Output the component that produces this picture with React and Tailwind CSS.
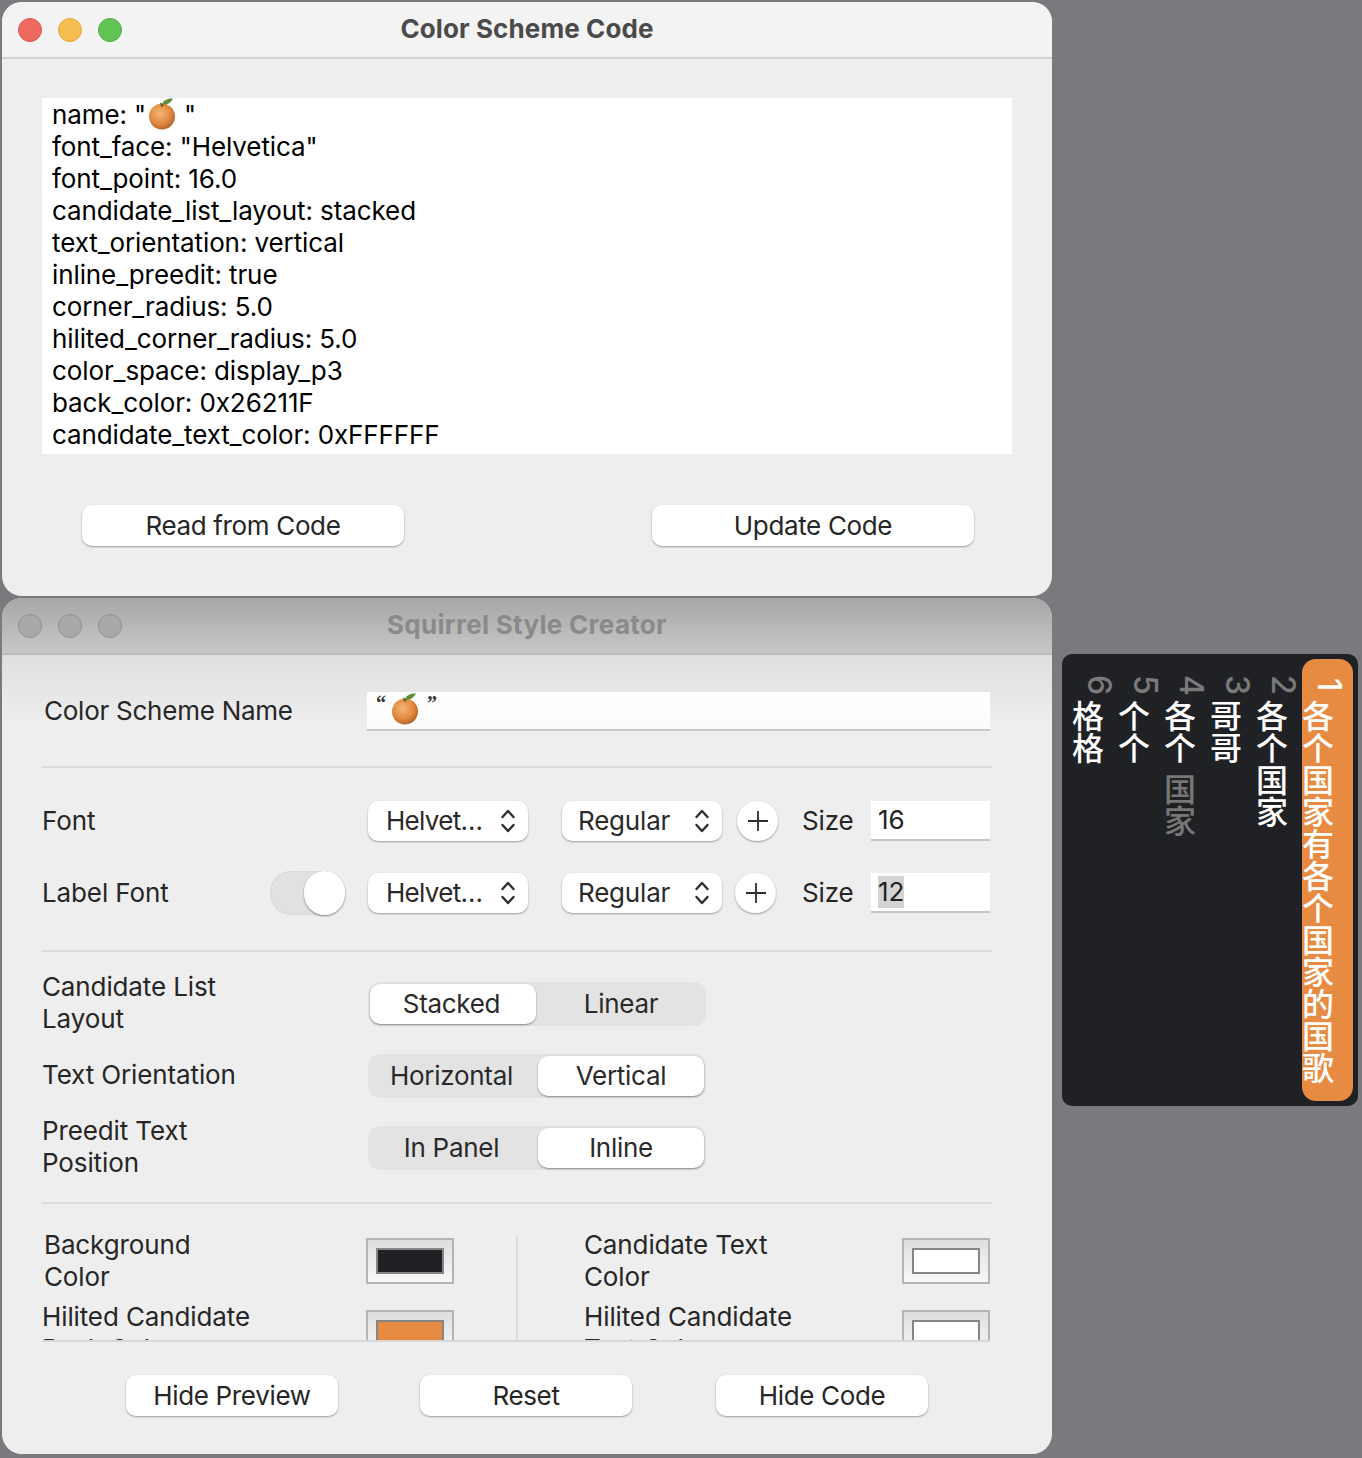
import React from "react";

const Orange = ({ id, className }) => (
  <svg viewBox="0 0 28 32" className={className}>
    <defs>
      <radialGradient id={id} cx="0.42" cy="0.38" r="0.7">
        <stop offset="0" stopColor="#f4b57c" />
        <stop offset="0.55" stopColor="#e48c42" />
        <stop offset="1" stopColor="#a85a20" />
      </radialGradient>
    </defs>
    <circle cx="14" cy="18.5" r="13" fill={`url(#${id})`} />
    <path d="M14 6.5 C15 2.5 19 0 25 0.5 C23 4.5 19 7.5 14 6.5Z" fill="#5f8f3a" />
    <path d="M14 7 L12.5 5" stroke="#4d6b2a" strokeWidth="1.4" />
    <circle cx="14" cy="7.4" r="1.3" fill="#6e5a25" />
  </svg>
);

const Lights = ({ inactive }) => (
  <div className="flex gap-[16px]">
    {(inactive
      ? ["bg-[#a9a9a9] border-[#8f8f8f]", "bg-[#a9a9a9] border-[#8f8f8f]", "bg-[#a9a9a9] border-[#8f8f8f]"]
      : ["bg-[#ee6a5f] border-[#d9574d]", "bg-[#f5bd4f] border-[#dfa63c]", "bg-[#61c454] border-[#52ad46]"]
    ).map((c, i) => (
      <span key={i} className={`w-[24px] h-[24px] rounded-full border ${c}`} />
    ))}
  </div>
);

const Btn = ({ w, children }) => (
  <button className={`${w} h-[41px] bg-white rounded-[10px] text-center tracking-[-0.35px] shadow-[0_1px_2px_rgba(0,0,0,0.35)] text-[#262626]`}>
    {children}
  </button>
);

const Chevrons = () => (
  <svg viewBox="0 0 16 24" className="w-[16px] h-[24px]" fill="none" stroke="#2e2e2e" strokeWidth="2.4" strokeLinecap="round" strokeLinejoin="round">
    <path d="M2.5 8 L8 2 L13.5 8" />
    <path d="M2.5 16 L8 22 L13.5 16" />
  </svg>
);

const Popup = ({ children, ml, pl, track }) => (
  <div className={`${ml} ${pl} ${track} w-[160px] h-[40px] bg-white rounded-[10px] shadow-[0_1px_2px_rgba(0,0,0,0.35)] flex items-center justify-between pr-[12px] text-[#2a2a2a]`}>
    <span>{children}</span>
    <Chevrons />
  </div>
);

const Plus = ({ ml }) => (
  <div className={`${ml} w-[41px] h-[40px] rounded-full bg-white shadow-[0_1px_2px_rgba(0,0,0,0.35)] flex items-center justify-center`}>
    <svg viewBox="0 0 24 24" className="w-[24px] h-[24px]" stroke="#2e2e2e" strokeWidth="1.8">
      <path d="M12 2 V22 M2 12 H22" />
    </svg>
  </div>
);

const SizeInput = ({ value, selected }) => (
  <div className="w-[119px] h-[40px] bg-white border-b-2 border-[#c4c4c4] flex items-center pl-[7px] ml-[19px] text-[#222]">
    <span className={selected ? "bg-[#d4d4d4] h-[32px] leading-[32px]" : ""}>{value}</span>
  </div>
);

const Seg = ({ a, b, sel }) => (
  <div className="ml-px w-[338px] h-[44px] rounded-[12px] bg-[#e3e3e3] p-[2px] flex gap-[2px] text-[#2a2a2a] tracking-[-0.3px]">
    {[a, b].map((t, i) => (
      <div key={t} className={`w-[166px] shrink-0 h-[40px] rounded-[10px] flex items-center justify-center ${i === 0 ? "pr-[3px]" : ""} ${i === sel ? "bg-white shadow-[0_1px_2px_rgba(0,0,0,0.4)]" : ""}`}>
        {t}
      </div>
    ))}
  </div>
);

const Swatch = ({ fill }) => (
  <div className="w-[88px] h-[46px] shrink-0 mt-[9px] border-2 border-[#b4b4b4] bg-gradient-to-b from-[#dedede] to-[#f8f8f8] flex items-center justify-center">
    <div className={`w-[68px] h-[26px] border-2 border-[#858585] ${fill}`} />
  </div>
);

const Sep = () => <div className="h-[2px] bg-[#dcdcdc] w-[950px]" />;

const V = "[writing-mode:vertical-rl]";

const Candidate = ({ n, text, comment, hi }) => (
  <div className={`${hi ? "w-[51px] bg-[#e88b42] rounded-[14px]" : "w-[32px]"} ml-[14px] shrink-0 flex flex-col pt-[11px]`}>
    <div className={`${V} w-[32px] h-[30px] ml-[11px] text-center text-[32px] leading-[32px] font-medium font-[Inter,sans-serif] ${hi ? "text-white" : "text-[#7a7a7a]"}`}>{n}</div>
    <div className={`${V} w-[32px] text-[32px] leading-[32px] font-medium text-white`}>{text}</div>
    {comment && <div className={`${V} w-[32px] mt-[9px] text-[32px] leading-[32px] font-medium text-[#777777]`}>{comment}</div>}
  </div>
);

const codeLines = [
  'font_face: "Helvetica"',
  "font_point: 16.0",
  "candidate_list_layout: stacked",
  "text_orientation: vertical",
  "inline_preedit: true",
  "corner_radius: 5.0",
  "hilited_corner_radius: 5.0",
  "color_space: display_p3",
  "back_color: 0x26211F",
  "candidate_text_color: 0xFFFFFF",
];

export default function App() {
  return (
    <div className="w-[1362px] h-[1458px] bg-[#7a7a7e] flex font-[Inter,sans-serif] text-[26px] leading-[32px] tracking-[-0.12px] overflow-hidden">
      {/* left column */}
      <div className="w-[1050px] ml-[2px] pt-[2px] flex flex-col gap-[2px] shrink-0">
        {/* Code window */}
        <div className="h-[594px] bg-[#eeeeee] rounded-[20px] overflow-hidden flex flex-col">
          <div className="h-[57px] shrink-0 bg-[#f3f3f3] border-b-2 border-[#d2d2d2] flex items-center pl-[16px] relative">
            <Lights />
            <div className="absolute inset-x-0 top-[11px] text-center font-bold tracking-[0.1px] text-[#4a4a4a]">Color Scheme Code</div>
          </div>
          <div className="mx-[40px] mt-[39px] h-[356px] bg-white pl-[10px] text-black tracking-[-0.1px]">
            <div className="flex items-start h-[32px] pt-[1px]">
              <span className="whitespace-pre">name: "</span>
              <Orange id="o1" className="w-[28px] h-[32px] ml-[2px] mr-[8px] -mt-[1px]" />
              <span>"</span>
            </div>
            {codeLines.map((l) => (
              <div key={l} className="h-[32px] pt-[1px]">{l}</div>
            ))}
          </div>
          <div className="flex justify-between pl-[80px] pr-[78px] mt-[51px]">
            <Btn w="w-[322px]">Read from Code</Btn>
            <Btn w="w-[322px]">Update Code</Btn>
          </div>
        </div>

        {/* Creator window */}
        <div className="h-[856px] bg-[#eeeeee] rounded-[20px] overflow-hidden flex flex-col">
          <div className="h-[57px] shrink-0 bg-gradient-to-b from-[#a6a6a6] to-[#c8c8c8] border-b-2 border-[#bcbcbc] flex items-center pl-[16px] relative">
            <Lights inactive />
            <div className="absolute inset-x-0 top-[11px] text-center font-bold tracking-[0.3px] text-[#8a8a8a]">Squirrel Style Creator</div>
          </div>
          <div className="h-[687px] shrink-0 bg-[linear-gradient(#dfdfdf,#eeeeee_70px)] pl-[40px] pr-[60px] text-[#262626] overflow-hidden">
            <div className="w-[950px] h-[685px] overflow-hidden">
              {/* Name */}
              <div className="flex h-[40px] mt-[36px] items-center">
                <div className="w-[325px] pl-[2px] tracking-[-0.25px]">Color Scheme Name</div>
                <div className="w-[623px] h-[40px] bg-gradient-to-b from-white to-[#fbfbfb] border-b-2 border-[#c8c8c8] border-t border-t-[#e2e2e2] flex items-start pl-[9px] text-[#333]">
                  <span className="font-['Liberation_Serif',serif] font-bold text-[20px] leading-[20px] mt-[1px]">“</span>
                  <Orange id="o2" className="w-[28px] h-[32px] ml-[5px] mr-[8px] mt-[1px]" />
                  <span className="font-['Liberation_Serif',serif] font-bold text-[20px] leading-[20px] mt-[1px]">”</span>
                </div>
              </div>
              <div className="mt-[35px]"><Sep /></div>
              {/* Font */}
              <div className="flex h-[40px] mt-[33px] items-center">
                <div className="w-[326px]">Font</div>
                <Popup pl="pl-[18px]" ml="" track="tracking-[-0.7px]">Helvet…</Popup>
                <Popup pl="pl-[16px]" ml="ml-[34px]" track="tracking-[-0.2px]">Regular</Popup>
                <Plus ml="ml-[15px]" />
                <div className="ml-[24px] w-[50px]">Size</div>
                <SizeInput value="16" />
              </div>
              <div className="flex h-[40px] mt-[32px] items-center">
                <div className="w-[326px] flex items-center justify-between pr-[23px]">
                  <span>Label Font</span>
                  <div className="w-[75px] h-[44px] rounded-full bg-[#e1e1e1] shadow-[inset_0_0_1px_rgba(0,0,0,0.25)] flex justify-end">
                    <div className="w-[41px] h-[44px] rounded-full bg-white shadow-[0_1px_2px_rgba(0,0,0,0.45)]" />
                  </div>
                </div>
                <Popup pl="pl-[18px]" ml="" track="tracking-[-0.7px]">Helvet…</Popup>
                <Popup pl="pl-[16px]" ml="ml-[34px]" track="tracking-[-0.2px]">Regular</Popup>
                <Plus ml="ml-[13px]" />
                <div className="ml-[26px] w-[50px]">Size</div>
                <SizeInput value="12" selected />
              </div>
              <div className="mt-[37px]"><Sep /></div>
              {/* Segments */}
              <div className="flex mt-[19px] h-[64px]">
                <div className="w-[325px]">Candidate List<br />Layout</div>
                <div className="mt-[11px]"><Seg a="Stacked" b="Linear" sel={0} /></div>
              </div>
              <div className="flex mt-[8px] h-[64px]">
                <div className="w-[325px] pt-[16px]">Text Orientation</div>
                <div className="mt-[11px]"><Seg a="Horizontal" b="Vertical" sel={1} /></div>
              </div>
              <div className="flex mt-[8px] h-[64px]">
                <div className="w-[325px]">Preedit Text<br />Position</div>
                <div className="mt-[11px]"><Seg a="In Panel" b="Inline" sel={1} /></div>
              </div>
              <div className="mt-[23px]"><Sep /></div>
              {/* Colours */}
              <div className="flex mt-[25px]">
                <div className="w-[474px] flex flex-col gap-[8px]">
                  <div className="flex h-[64px]">
                    <div className="w-[324px] pl-[2px]">Background<br />Color</div>
                    <Swatch fill="bg-[#202125]" />
                  </div>
                  <div className="flex h-[64px]">
                    <div className="w-[324px]">Hilited Candidate<br />Back Color</div>
                    <Swatch fill="bg-[#e88b42]" />
                  </div>
                </div>
                <div className="w-[2px] h-[120px] mt-[7px] bg-[#dcdcdc]" />
                <div className="ml-[66px] flex flex-col gap-[8px]">
                  <div className="flex h-[64px]">
                    <div className="w-[318px]">Candidate Text<br />Color</div>
                    <Swatch fill="bg-white" />
                  </div>
                  <div className="flex h-[64px]">
                    <div className="w-[318px]">Hilited Candidate<br />Text Color</div>
                    <Swatch fill="bg-white" />
                  </div>
                </div>
              </div>
            </div>
            <div className="h-[2px] w-[948px] bg-[#d8d8d8]" />
          </div>
          <div className="flex pl-[124px] gap-[82px] mt-[33px]">
            <Btn w="w-[212px]">Hide Preview</Btn>
            <Btn w="w-[212px]">Reset</Btn>
            <div className="ml-[2px]"><Btn w="w-[212px]">Hide Code</Btn></div>
          </div>
        </div>
      </div>

      {/* preview */}
      <div className="ml-[10px] mt-[654px] w-[296px] h-[452px] bg-[#202125] rounded-[10px] p-[5px] flex flex-row-reverse tracking-normal font-['Noto_Sans_CJK_SC',sans-serif]">
        <Candidate hi n="1" text="各个国家有各个国家的国歌" />
        <Candidate n="2" text="各个国家" />
        <Candidate n="3" text="哥哥" />
        <Candidate n="4" text="各个" comment="国家" />
        <Candidate n="5" text="个个" />
        <Candidate n="6" text="格格" />
      </div>
    </div>
  );
}
